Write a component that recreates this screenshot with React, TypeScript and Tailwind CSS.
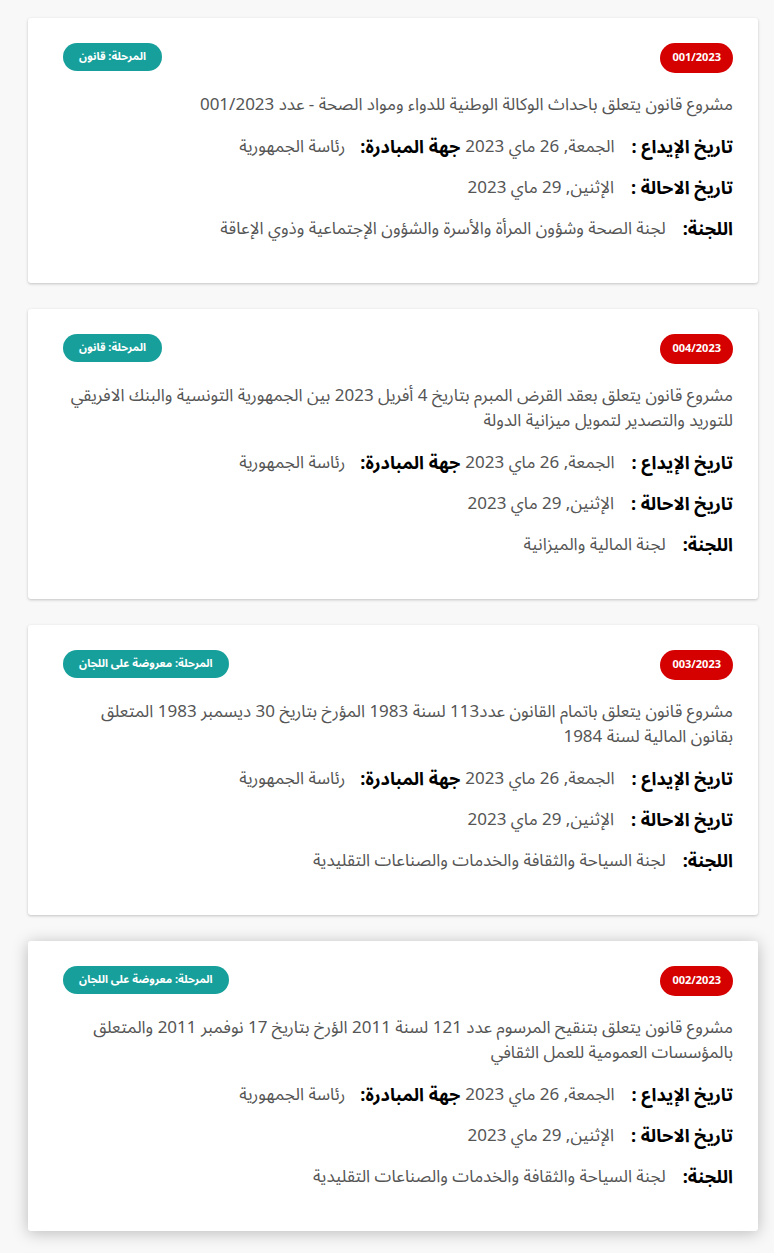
import React from "react";

type Bill = {
  num: string;
  stage: string;
  title: string;
  deposit: string;
  initiator: string;
  referral: string;
  committee: string;
  hovered?: boolean;
};

const bills: Bill[] = [
  {
    num: "001/2023",
    stage: "المرحلة: قانون",
    title: "مشروع قانون يتعلق باحداث الوكالة الوطنية للدواء ومواد الصحة - عدد 001/2023",
    deposit: "الجمعة, 26 ماي 2023",
    initiator: "رئاسة الجمهورية",
    referral: "الإثنين, 29 ماي 2023",
    committee: "لجنة الصحة وشؤون المرأة والأسرة والشؤون الإجتماعية وذوي الإعاقة",
  },
  {
    num: "004/2023",
    stage: "المرحلة: قانون",
    title:
      "مشروع قانون يتعلق بعقد القرض المبرم بتاريخ 4 أفريل 2023 بين الجمهورية التونسية والبنك الافريقي للتوريد والتصدير لتمويل ميزانية الدولة",
    deposit: "الجمعة, 26 ماي 2023",
    initiator: "رئاسة الجمهورية",
    referral: "الإثنين, 29 ماي 2023",
    committee: "لجنة المالية والميزانية",
  },
  {
    num: "003/2023",
    stage: "المرحلة: معروضة على اللجان",
    title:
      "مشروع قانون يتعلق باتمام القانون عدد113 لسنة 1983 المؤرخ بتاريخ 30 ديسمبر 1983 المتعلق بقانون المالية لسنة 1984",
    deposit: "الجمعة, 26 ماي 2023",
    initiator: "رئاسة الجمهورية",
    referral: "الإثنين, 29 ماي 2023",
    committee: "لجنة السياحة والثقافة والخدمات والصناعات التقليدية",
  },
  {
    num: "002/2023",
    stage: "المرحلة: معروضة على اللجان",
    title:
      "مشروع قانون يتعلق بتنقيح المرسوم عدد 121 لسنة 2011 الؤرخ بتاريخ 17 نوفمبر 2011 والمتعلق بالمؤسسات العمومية للعمل الثقافي",
    deposit: "الجمعة, 26 ماي 2023",
    initiator: "رئاسة الجمهورية",
    referral: "الإثنين, 29 ماي 2023",
    committee: "لجنة السياحة والثقافة والخدمات والصناعات التقليدية",
    hovered: true,
  },
];

function BillCard({ bill }: { bill: Bill }) {
  return (
    <div
      className={
        "bg-white rounded-[3px] pt-[25px] pb-[25px] pr-[25px] pl-[35px] " +
        (bill.hovered
          ? "shadow-[0_2px_16px_rgba(0,0,0,0.25)]"
          : "shadow-[0_1px_3px_rgba(0,0,0,0.22)]")
      }
    >
      <div className="flex items-start justify-between h-[30px]">
        <span className="h-[30px] px-[12px] rounded-full bg-[#d50000] text-white text-[11px] font-bold flex items-center">
          {bill.num}
        </span>
        <span className="h-[28px] px-[16px] rounded-full bg-[#17a09b] text-white text-[11px] font-bold flex items-center">
          {bill.stage}
        </span>
      </div>
      <p className="mt-[20px] mb-[17px] text-[17px] leading-[25px] text-[#555]">{bill.title}</p>
      <div className="mb-[16px] leading-[25px] flex items-center">
        <span className="font-bold text-[18px] text-black ml-[17px]">تاريخ الإيداع :</span>
        <span className="text-[17px] text-[#555]">{bill.deposit}</span>
        <span className="font-bold text-[18px] text-black mr-[5px] ml-[15px]">جهة المبادرة:</span>
        <span className="text-[17px] text-[#555]">{bill.initiator}</span>
      </div>
      <div className="mb-[16px] leading-[25px] flex items-center">
        <span className="font-bold text-[18px] text-black ml-[17px]">تاريخ الاحالة :</span>
        <span className="text-[17px] text-[#555]">{bill.referral}</span>
      </div>
      <div className="mb-[16px] leading-[25px] flex items-center">
        <span className="font-bold text-[18px] text-black ml-[17px]">اللجنة:</span>
        <span className="text-[17px] text-[#555]">{bill.committee}</span>
      </div>
    </div>
  );
}

export default function App() {
  return (
    <div
      dir="rtl"
      className="min-h-[1253px] bg-[#f8f8f8] pt-[18px] pb-[20px] pl-[28px] pr-[16px] font-['Noto_Sans_Arabic','Noto_Sans','DejaVu_Sans',sans-serif]"
    >
      <div className="flex flex-col gap-[26px]">
        {bills.map((b) => (
          <BillCard key={b.num} bill={b} />
        ))}
      </div>
    </div>
  );
}
